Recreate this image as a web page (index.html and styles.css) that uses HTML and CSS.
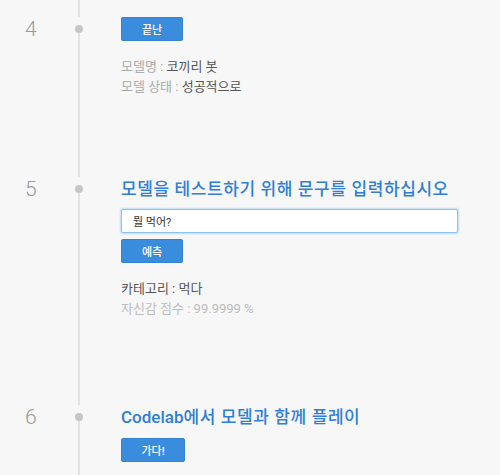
FILE: index.html
```html
<!DOCTYPE html>
<html lang="ko">
<head>
    <meta charset="UTF-8">
    <title>모델 테스트</title>
    <link rel="stylesheet" href="styles.css">
</head>
<body>
    <div class="timeline">
        <!-- step 4 -->
        <div class="step step-first">
            <div class="num">4</div>
            <div class="dot-col"><span class="dot"></span></div>
            <div class="content">
                <button class="btn">끝난</button>
                <div class="info">
                    <p><span class="label">모델명 :</span> <span class="value">코끼리 봇</span></p>
                    <p><span class="label">모델 상태 :</span> <span class="value">성공적으로</span></p>
                </div>
            </div>
        </div>

        <!-- step 5 -->
        <div class="step step-test">
            <div class="num">5</div>
            <div class="dot-col"><span class="dot"></span></div>
            <div class="content">
                <h2 class="title">모델을 테스트하기 위해 문구를 입력하십시오</h2>
                <input type="text" class="phrase" value="뭘 먹어?">
                <button class="btn btn-predict">예측</button>
                <div class="result">
                    <p class="category">카테고리 : 먹다</p>
                    <p class="score">자신감 점수 : 99.9999 %</p>
                </div>
            </div>
        </div>

        <!-- step 6 -->
        <div class="step step-last">
            <div class="num">6</div>
            <div class="dot-col"><span class="dot"></span></div>
            <div class="content">
                <h2 class="title"><span class="latin">Codelab</span>에서 모델과 함께 플레이</h2>
                <button class="btn btn-go">가다!</button>
            </div>
        </div>
    </div>
</body>
</html>
```

FILE: styles.css
```css
body {
    font-family: Roboto, "Noto Sans CJK KR", sans-serif;
    background-color: #f7f7f7;
    margin: 0;
    padding: 0;
    color: #555;
}
.timeline {
    position: relative;
    padding-top: 17px;
}
.timeline::before {
    content: "";
    position: absolute;
    left: 78px;
    top: 0;
    bottom: 0;
    width: 2px;
    background-color: #e2e2e2;
}
.step {
    display: grid;
    grid-template-columns: 58px 42px 1fr;
    align-items: start;
}
.step-first {
    padding-bottom: 81px;
}
.step-test {
    padding-bottom: 87px;
}
.step-last {
    padding-bottom: 40px;
}
.num {
    padding-left: 25px;
    font-size: 21px;
    font-weight: 300;
    color: #9a9a9a;
    line-height: 22px;
    height: 22px;
}
.step-first .num {
    margin-top: 1px;
}
.dot-col {
    display: flex;
    justify-content: center;
    align-items: center;
    height: 22px;
}
.step-first .dot-col {
    height: 24px;
}
.dot {
    position: relative;
    width: 8px;
    height: 8px;
    border-radius: 50%;
    background-color: #c6c6c6;
    box-shadow: 0 -6px 0 2px #f7f7f7;
}
.content {
    padding-left: 21px;
    display: flex;
    flex-direction: column;
    align-items: flex-start;
}
.btn {
    width: 62px;
    height: 24px;
    padding: 0;
    background-color: #3a8cdc;
    color: #fff;
    border: 1px solid #3483d2;
    border-radius: 2px;
    font-family: inherit;
    font-size: 11px;
    font-weight: 500;
    cursor: pointer;
}
.btn-go {
    width: 64px;
}
.info {
    margin-top: 16px;
    font-size: 13px;
    line-height: 20px;
}
.info p, .result p {
    margin: 0;
}
.label {
    color: #ababab;
}
.value {
    color: #555;
}
.title {
    margin: 0;
    font-size: 17px;
    line-height: 22px;
    font-weight: 500;
    letter-spacing: 0.6px;
    color: #2e7fd5;
}
.title .latin {
    letter-spacing: 0;
}
.phrase {
    box-sizing: border-box;
    width: 337px;
    height: 24px;
    margin-top: 9px;
    padding: 0 11px;
    border: 1px solid #8ec0f4;
    border-radius: 2px;
    box-shadow: 0 0 2px 1px #bcdcfb;
    background-color: #fff;
    font-family: inherit;
    font-size: 11px;
    color: #333;
    outline: none;
}
.btn-predict {
    margin-top: 6px;
}
.result {
    margin-top: 16px;
    font-size: 13px;
    line-height: 20px;
}
.category {
    color: #555;
}
.score {
    color: #bdbdbd;
}
.step-last .btn {
    margin-top: 10px;
}
```
